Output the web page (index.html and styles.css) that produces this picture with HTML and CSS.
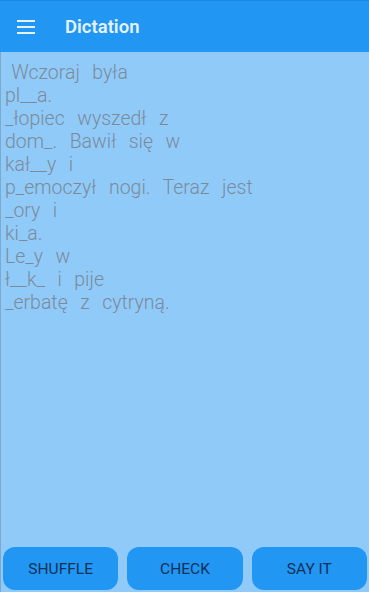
FILE: index.html
```html
<!DOCTYPE html>
<html>
<head>
<meta charset="utf-8">
<link rel="stylesheet" href="styles.css">
</head>
<body>
<div class="app">
  <header class="bar">
    <svg class="menu" width="18" height="14" viewBox="0 0 18 14"><rect x="0" y="0" width="18" height="2" fill="#e3f2fd"/><rect x="0" y="6" width="18" height="2" fill="#e3f2fd"/><rect x="0" y="12" width="18" height="2" fill="#e3f2fd"/></svg>
    <span class="title">Dictation</span>
  </header>
  <main class="content">
<div class="text"> Wczoraj  była
pl__a.
_łopiec  wyszedł  z
dom_.  Bawił  się  w
kał__y  i
p_emoczył  nogi.  Teraz  jest
_ory  i
ki_a.
Le_y  w
ł__k_  i  pije
_erbatę  z  cytryną.</div>
    <div class="buttons">
      <button class="btn">SHUFFLE</button>
      <button class="btn">CHECK</button>
      <button class="btn">SAY IT</button>
    </div>
  </main>
</div>
</body>
</html>
```
FILE: styles.css
```css
html, body { margin: 0; padding: 0; }
body { font-family: Roboto, "Noto Sans", sans-serif; background: #90caf9; }
.app { width: 369px; height: 592px; display: flex; flex-direction: column; }
.bar { height: 52px; background: #2196f3; display: flex; align-items: center; box-sizing: border-box; border-top: 1px solid #1e88e5; flex: none; }
.menu { margin-left: 17px; margin-right: 30px; }
.title { color: #e3f2fd; font-size: 18.5px; font-weight: 600; }
.content { flex: 1; display: flex; flex-direction: column; justify-content: space-between; background: #90caf9; border-left: 1px solid #7fa9cc; }
.text { white-space: pre; color: #7b8a99; font-size: 19.5px; font-weight: 300; line-height: 23px; word-spacing: 1.5px; padding: 9px 0 0 4px; }
.buttons { display: flex; gap: 9px; padding: 0 2px 2px 2px; }
.btn { flex: 1; height: 43px; border: none; border-radius: 12px; background: #2196f3; color: #12315a; font-family: Roboto, sans-serif; font-size: 15.5px; padding: 0; }
```
